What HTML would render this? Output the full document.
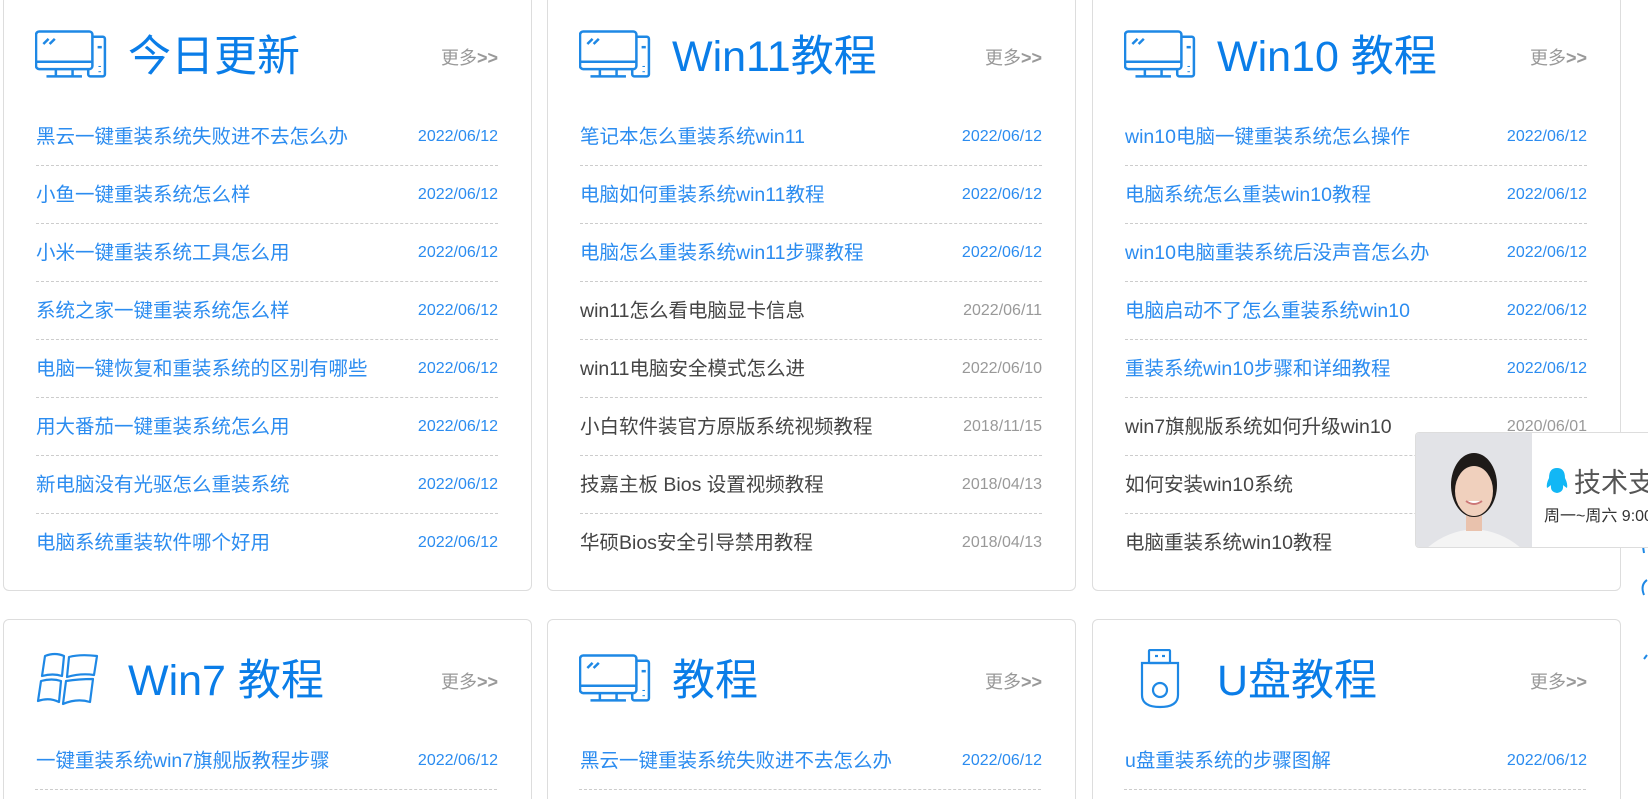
<!DOCTYPE html>
<html style="width:1648px;height:799px;overflow:hidden"><head><meta charset="utf-8"><style>
*{margin:0;padding:0;box-sizing:border-box}
body{width:1648px;height:799px;overflow:hidden;background:#fff;font-family:"Liberation Sans","Noto Sans CJK SC",sans-serif;position:relative}
.card{position:absolute;width:529px;height:596px;border:1px solid #ddd;border-radius:6px;background:#fff}
.r2{height:200px;border-bottom:none;border-radius:6px 6px 0 0}
.ic{position:absolute;left:31px;top:34px}
.tt{position:absolute;left:124px;top:36px;font-size:43px;line-height:50px;color:#0a7de8}
.more{position:absolute;right:33px;top:48px;font-size:18px;color:#999}
.more b{font-weight:bold}
ul{position:absolute;left:32px;right:33px;top:112px;list-style:none}
li{height:58px;line-height:58px;border-bottom:1px dashed #ccc;display:flex;justify-content:space-between;font-size:19.5px;color:#2b8cf0}
li span{font-size:16px;color:#2b8cf0}
li:last-child{border-bottom:none}
li.g{color:#444}li.g span{color:#999}
.pop{position:absolute;left:1415px;top:432px;width:260px;height:116px;border:1px solid #ddd;background:#fff;border-radius:4px;overflow:hidden}
.dl{position:absolute;width:462px;top:789px;border-top:1px dashed #ccc}
</style></head><body>

<svg width="0" height="0" style="position:absolute"><defs>
<g id="mon" fill="none" stroke="#1e88e5" stroke-width="2.4" stroke-linejoin="round">
<rect x="51" y="6" width="16" height="38" rx="2"/>
<rect x="1" y="1" width="54" height="36" rx="3" fill="#fff"/>
<line x1="1" y1="30" x2="55" y2="30"/>
<line x1="8" y1="13" x2="13" y2="8"/><line x1="14" y1="13" x2="19" y2="8"/>
<line x1="20" y1="37" x2="20" y2="44"/><line x1="36" y1="37" x2="36" y2="44"/>
<line x1="11" y1="44" x2="45" y2="44"/>
<line x1="60" y1="16" x2="64" y2="16"/><line x1="62" y1="34" x2="62" y2="35"/><line x1="62" y1="39" x2="62" y2="40"/>
</g></defs></svg>

<!-- Row 1 -->
<div class="card" style="left:3px;top:-5px">
<svg class="ic" width="72" height="50" viewBox="0 0 69 47"><use href="#mon"/></svg>
<div class="tt">今日更新</div><div class="more">更多<b>&gt;&gt;</b></div>
<ul>
<li>黑云一键重装系统失败进不去怎么办<span>2022/06/12</span></li>
<li>小鱼一键重装系统怎么样<span>2022/06/12</span></li>
<li>小米一键重装系统工具怎么用<span>2022/06/12</span></li>
<li>系统之家一键重装系统怎么样<span>2022/06/12</span></li>
<li>电脑一键恢复和重装系统的区别有哪些<span>2022/06/12</span></li>
<li>用大番茄一键重装系统怎么用<span>2022/06/12</span></li>
<li>新电脑没有光驱怎么重装系统<span>2022/06/12</span></li>
<li>电脑系统重装软件哪个好用<span>2022/06/12</span></li>
</ul></div>

<div class="card" style="left:547px;top:-5px">
<svg class="ic" width="72" height="50" viewBox="0 0 69 47"><use href="#mon"/></svg>
<div class="tt">Win11教程</div><div class="more">更多<b>&gt;&gt;</b></div>
<ul>
<li>笔记本怎么重装系统win11<span>2022/06/12</span></li>
<li>电脑如何重装系统win11教程<span>2022/06/12</span></li>
<li>电脑怎么重装系统win11步骤教程<span>2022/06/12</span></li>
<li class="g">win11怎么看电脑显卡信息<span>2022/06/11</span></li>
<li class="g">win11电脑安全模式怎么进<span>2022/06/10</span></li>
<li class="g">小白软件装官方原版系统视频教程<span>2018/11/15</span></li>
<li class="g">技嘉主板 Bios 设置视频教程<span>2018/04/13</span></li>
<li class="g">华硕Bios安全引导禁用教程<span>2018/04/13</span></li>
</ul></div>

<div class="card" style="left:1092px;top:-5px">
<svg class="ic" width="72" height="50" viewBox="0 0 69 47"><use href="#mon"/></svg>
<div class="tt">Win10 教程</div><div class="more">更多<b>&gt;&gt;</b></div>
<ul>
<li>win10电脑一键重装系统怎么操作<span>2022/06/12</span></li>
<li>电脑系统怎么重装win10教程<span>2022/06/12</span></li>
<li>win10电脑重装系统后没声音怎么办<span>2022/06/12</span></li>
<li>电脑启动不了怎么重装系统win10<span>2022/06/12</span></li>
<li>重装系统win10步骤和详细教程<span>2022/06/12</span></li>
<li class="g">win7旗舰版系统如何升级win10<span>2020/06/01</span></li>
<li class="g">如何安装win10系统<span>2020/06/01</span></li>
<li class="g">电脑重装系统win10教程<span>2020/06/01</span></li>
</ul></div>

<!-- Row 2 -->
<div class="card r2" style="left:3px;top:619px">
<svg class="ic" width="70" height="56" style="top:32px"><g fill="none" stroke="#1e88e5" stroke-width="2.2" stroke-linejoin="round">
<path d="M10 4 Q20 0 29 4 L27 24 Q18 21 7 24 Z"/>
<path d="M34 5 Q45 2 62 4 L59 23 Q46 21 32 25 Z"/>
<path d="M6 29 Q17 26 26 29 L24 50 Q14 45 3 49 Z"/>
<path d="M31 29 Q44 27 58 27 L55 50 Q42 46 28 52 Z"/></g></svg>
<div class="tt">Win7 教程</div><div class="more">更多<b>&gt;&gt;</b></div>
<ul><li>一键重装系统win7旗舰版教程步骤<span>2022/06/12</span></li></ul></div>

<div class="card r2" style="left:547px;top:619px">
<svg class="ic" width="72" height="50" viewBox="0 0 69 47"><use href="#mon"/></svg>
<div class="tt">教程</div><div class="more">更多<b>&gt;&gt;</b></div>
<ul><li>黑云一键重装系统失败进不去怎么办<span>2022/06/12</span></li></ul></div>

<div class="card r2" style="left:1092px;top:619px">
<svg class="ic" width="50" height="60" style="left:46px;top:29px"><g fill="none" stroke="#1e88e5" stroke-width="2.2">
<rect x="10" y="1" width="21" height="13" rx="1"/><line x1="16" y1="7" x2="19" y2="7"/><line x1="23" y1="7" x2="26" y2="7"/>
<path d="M3 14 H39 V46 Q39 58 21 58 Q3 58 3 46 Z"/><circle cx="21" cy="41" r="7"/></g></svg>
<div class="tt">U盘教程</div><div class="more">更多<b>&gt;&gt;</b></div>
<ul><li>u盘重装系统的步骤图解<span>2022/06/12</span></li></ul></div>
<div class="dl" style="left:35px"></div>
<div class="dl" style="left:579px"></div>
<div class="dl" style="left:1124px"></div>

<!-- right edge icons -->
<svg style="position:absolute;left:1638px;top:525px" width="10" height="140"><g fill="none" stroke="#1e88e5" stroke-width="2"><path d="M9 5 Q3 12 6 28"/><path d="M9 55 Q2 60 6 70"/><path d="M9 130 L6 134"/></g></svg>

<div class="pop">
<svg width="116" height="116" style="position:absolute;left:0;top:0">
<rect width="116" height="116" fill="#e2e3e7"/>
<path d="M10 116 Q30 98 58 96 Q86 98 106 116 Z" fill="#f4f4f4"/>
<rect x="50" y="78" width="16" height="20" fill="#e9c2ad"/>
<ellipse cx="58" cy="52" rx="23" ry="32" fill="#1e1a18"/>
<ellipse cx="58" cy="58" rx="19" ry="25" fill="#f0d0bd"/>
<path d="M38 42 Q50 20 78 40 Q70 26 58 24 Q42 26 38 42Z" fill="#1e1a18"/>
<path d="M50 68 Q58 74 66 68" stroke="#c77" stroke-width="2" fill="#fff"/>
</svg>
<svg width="26" height="30" style="position:absolute;left:128px;top:33px"><path d="M13 2 Q5 2 5 12 Q2 18 3 22 Q6 20 7 19 Q6 26 13 27 Q20 26 19 19 Q20 20 23 22 Q24 18 21 12 Q21 2 13 2Z" fill="#12b7f5"/></svg>
<div style="position:absolute;left:158px;top:28px;font-size:27px;color:#555;white-space:nowrap">技术支持</div>
<div style="position:absolute;left:128px;top:69px;font-size:16px;color:#333;white-space:nowrap">周一~周六 9:00-18:00</div>
</div>
</body></html>
